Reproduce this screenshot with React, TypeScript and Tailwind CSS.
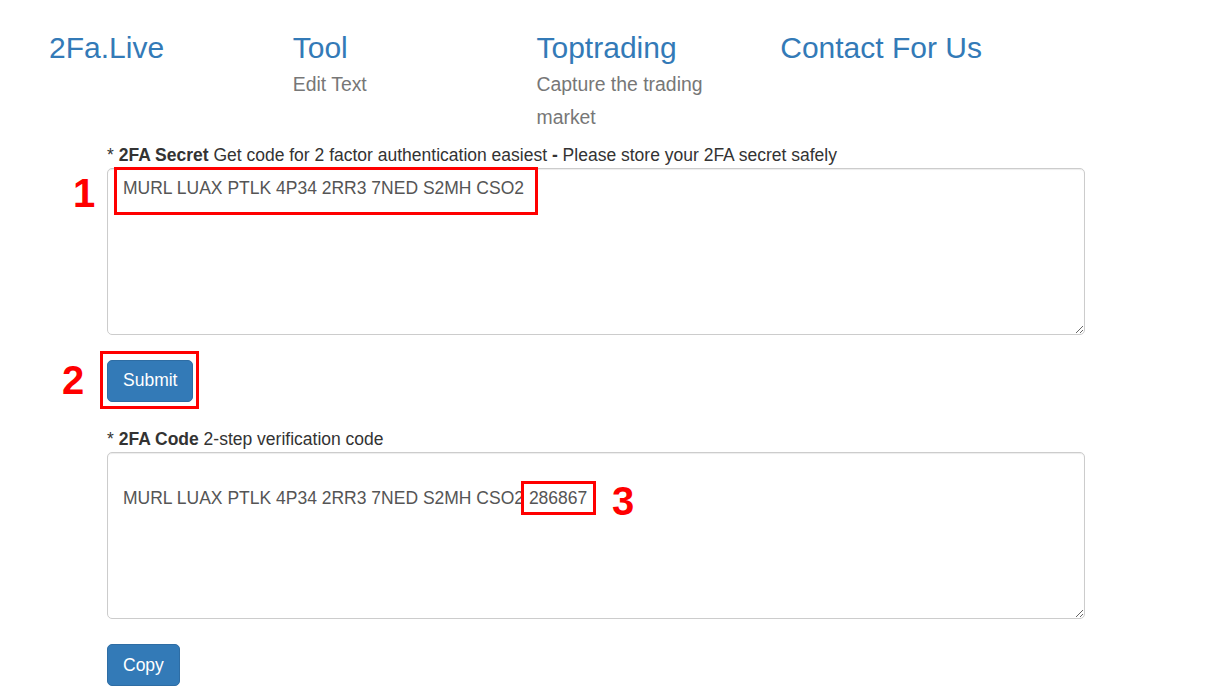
import React from "react";

const font = { fontFamily: '"Liberation Sans", Arial, sans-serif' };

export default function App() {
  const cols = [
    { t: "2Fa.Live", s: "" },
    { t: "Tool", s: "Edit Text" },
    { t: "Toptrading", s: "Capture the trading market" },
    { t: "Contact For Us", s: "" },
  ];
  return (
    <div className="relative w-[1222px] h-[692px] overflow-hidden bg-white text-[#333] font-['Liberation_Sans',Arial,sans-serif]">
      <div className="flex pl-[49px] pt-[30.5px]">
        {cols.map((c) => (
          <div key={c.t} className="w-[243.75px] shrink-0">
            <div className="text-[30px] leading-[33px] text-[#337ab7] whitespace-nowrap">{c.t}</div>
            {c.s && (
              <div className="mt-[4px] w-[206px] text-[19.4px] leading-[33px] text-[#777]">{c.s}</div>
            )}
          </div>
        ))}
      </div>

      <div className="pl-[107px] pt-[9px] w-[1085px] text-[17.5px] leading-[25px]">
        <label className="block">
          * <b>2FA Secret</b> Get code for 2 factor authentication easiest <b>-</b> Please store your 2FA secret safely
        </label>
        <textarea
          className="block w-[978px] h-[167px] border border-[#ccc] rounded-[5px] px-[15px] py-[7.5px] text-[17.5px] leading-[25px] text-[#555] shadow-[inset_0_1px_1px_rgba(0,0,0,0.075)] outline-none"
          style={font}
          defaultValue="MURL LUAX PTLK 4P34 2RR3 7NED S2MH CSO2"
        />
        <button className="mt-[25px] h-[42px] px-[15px] rounded-[5px] bg-[#337ab7] border border-[#2e6da4] text-white text-[17.5px] leading-[25px]">
          Submit
        </button>
        <label className="block mt-[25.5px]">
          * <b>2FA Code</b> 2-step verification code
        </label>
        <textarea
          className="block w-[978px] h-[167px] border border-[#ccc] rounded-[5px] px-[15px] py-[7.5px] text-[17.5px] leading-[25px] text-[#555] shadow-[inset_0_1px_1px_rgba(0,0,0,0.075)] outline-none"
          style={font}
          defaultValue={"\nMURL LUAX PTLK 4P34 2RR3 7NED S2MH CSO2 286867"}
        />
        <button className="mt-[25px] h-[42px] px-[15px] rounded-[5px] bg-[#337ab7] border border-[#2e6da4] text-white text-[17.5px] leading-[25px]">
          Copy
        </button>
      </div>

      {/* annotations */}
      <div className="absolute left-[114px] top-[167px] w-[424px] h-[48px] border-[3.5px] border-[#ff0000]" />
      <div className="absolute left-[100px] top-[351px] w-[99px] h-[58px] border-[3.5px] border-[#ff0000]" />
      <div className="absolute left-[521px] top-[481px] w-[75px] h-[34px] border-[3.5px] border-[#ff0000]" />
      <div className="absolute left-[73px] top-[173px] text-[40px] leading-[40px] font-bold text-[#ff0000]">1</div>
      <div className="absolute left-[62px] top-[360px] text-[40px] leading-[40px] font-bold text-[#ff0000]">2</div>
      <div className="absolute left-[612px] top-[481px] text-[40px] leading-[40px] font-bold text-[#ff0000]">3</div>
    </div>
  );
}
